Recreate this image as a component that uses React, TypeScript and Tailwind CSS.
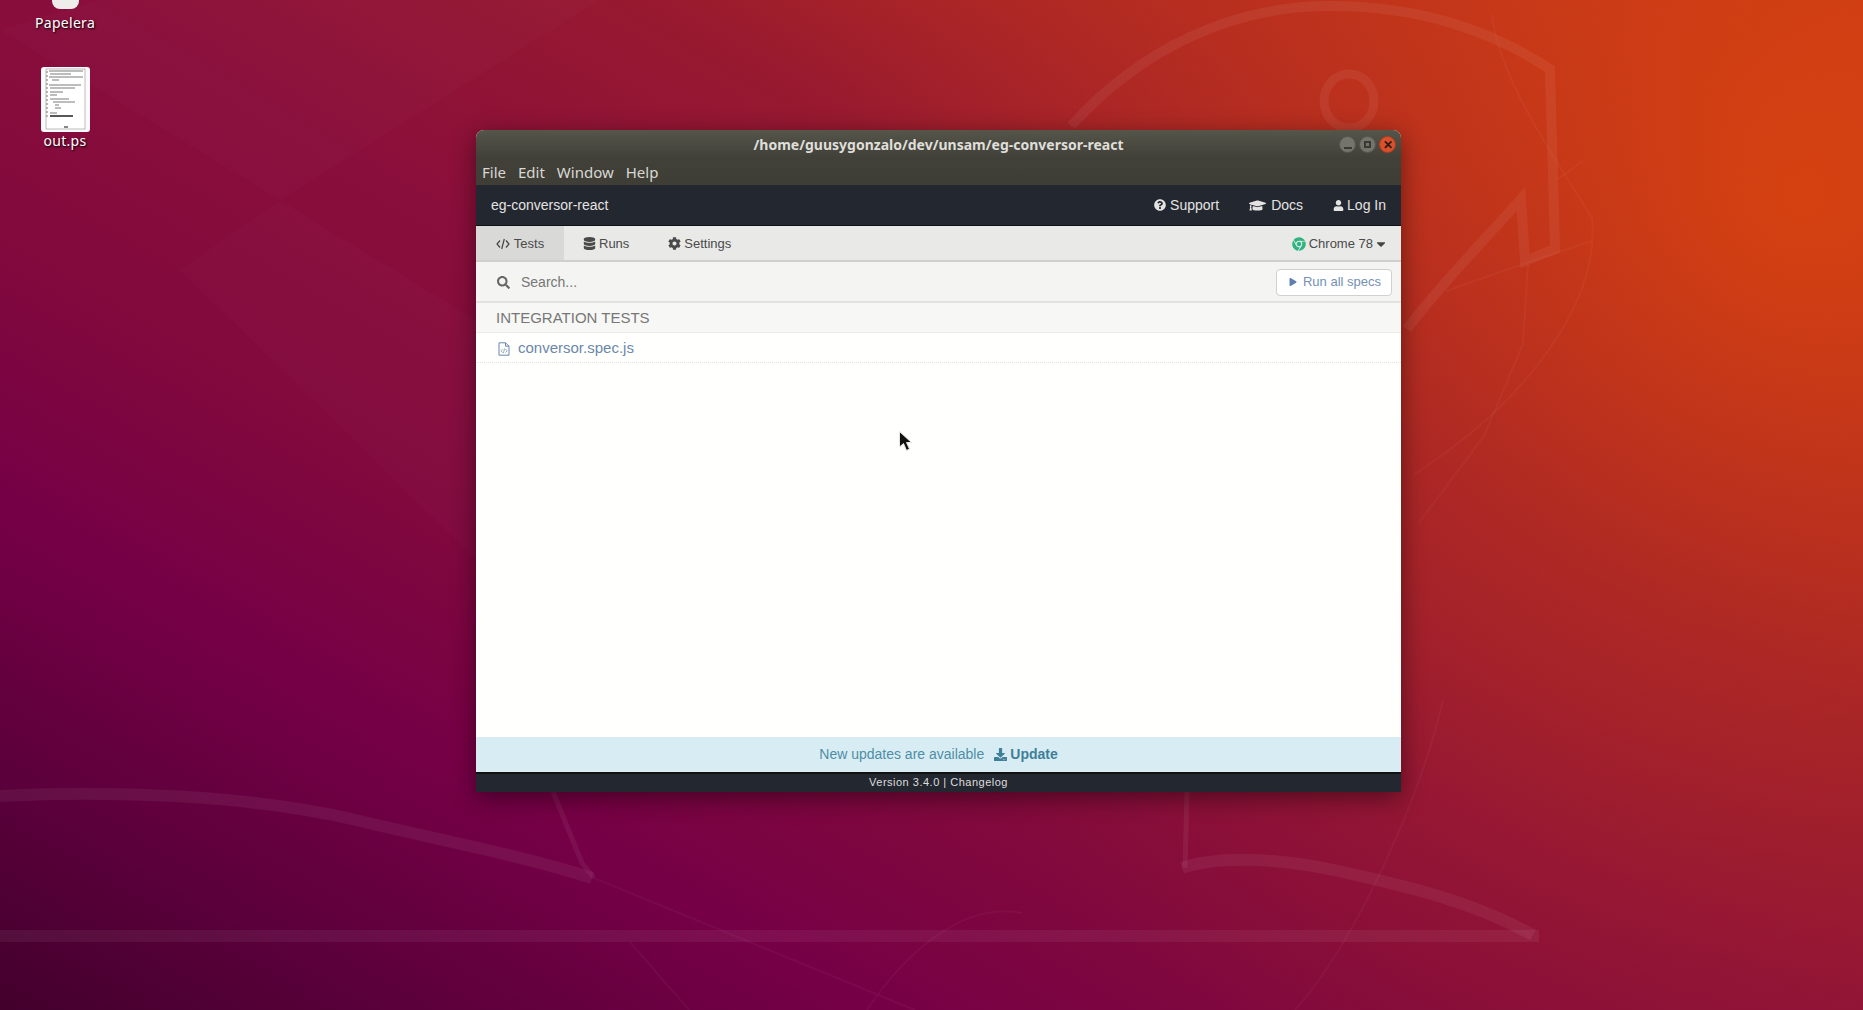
import { FaChrome, FaCog, FaDatabase, FaDownload, FaGraduationCap, FaPlay, FaQuestionCircle, FaSearch, FaUser, FaCaretDown } from 'react-icons/fa';

// Ubuntu wallpaper, drawn behind everything
function Wallpaper() {
  return (
    <svg className="absolute inset-0" width="1863" height="1010" viewBox="0 0 1863 1010">
      <defs>
        <linearGradient id="wall" gradientUnits="userSpaceOnUse" x1="0" y1="1043" x2="945" y2="-579">
          <stop offset="0" stopColor="#3f002b" />
          <stop offset="0.12" stopColor="#5a003a" />
          <stop offset="0.25" stopColor="#760046" />
          <stop offset="0.38" stopColor="#820a3c" />
          <stop offset="0.5" stopColor="#8a0e3b" />
          <stop offset="0.65" stopColor="#971930" />
          <stop offset="0.8" stopColor="#ba2f1e" />
          <stop offset="0.9" stopColor="#d03d15" />
          <stop offset="1" stopColor="#de480c" />
        </linearGradient>
        <radialGradient id="glow" gradientUnits="userSpaceOnUse" cx="1800" cy="200" r="1000">
          <stop offset="0" stopColor="#d8430f" stopOpacity="0.85" />
          <stop offset="0.55" stopColor="#b8301f" stopOpacity="0.5" />
          <stop offset="1" stopColor="#a0202c" stopOpacity="0" />
        </radialGradient>
      </defs>
      <rect width="1863" height="1010" fill="url(#wall)" />
      <rect width="1863" height="1010" fill="url(#glow)" />
      {/* faint facets */}
      <g fill="#ffffff" fillOpacity="0.014">
        <polygon points="0,30 100,0 600,0 280,200" />
        <polygon points="280,200 476,320 476,560 180,270" />
      </g>
      {/* logo, thick strokes */}
      <g fill="none" stroke="#ffffff" strokeOpacity="0.06">
        <path d="M1071 126C1140 50 1230 6 1330 6C1420 6 1490 30 1550 69L1555 249L1525 261L1521 199C1480 245 1440 285 1407 329" strokeWidth="10" />
        <ellipse cx="1349" cy="101" rx="25" ry="27" strokeWidth="9" />
        <path d="M0 796C110 790 250 795 356 820C430 838 520 855 592 878" strokeWidth="12" />
        <path d="M553 792L582 863L594 878" strokeWidth="5" />
        <path d="M1187 792L1185 868" strokeWidth="5" />
        <path d="M1182 868C1220 855 1280 858 1343 872C1400 885 1470 900 1533 935" strokeWidth="12" />
        <path d="M0 936H1539" strokeWidth="12" />
      </g>
      {/* logo, thin lines */}
      <g fill="none" stroke="#ffffff" strokeOpacity="0.035" strokeWidth="2">
        <path d="M1492 15C1500 80 1550 150 1592 218C1600 300 1530 400 1413 475" />
        <path d="M1583 161L1556 180M1592 241L1523 264L1446 291" />
        <path d="M1528 264L1523 344L1484 436L1418 524" />
        <path d="M594 878L915 1010M867 1010C900 960 960 900 1022 913M1443 700C1420 800 1355 943 1295 1010M630 942L689 1010" />
      </g>
    </svg>
  );
}

function TrashIcon() {
  return <div className="absolute left-[52px] top-0 w-[27px] h-[9px] bg-[#efedeb] rounded-b-[8px]" />;
}

function PostscriptThumb() {
  return (
    <svg className="absolute left-[41px] top-[67px]" width="49" height="65" viewBox="0 0 49 65">
      <rect width="49" height="65" rx="3" fill="#fbfbfb" />
      <rect x="5" y="2" width="39" height="60" fill="#ffffff" stroke="#8f8f8f" strokeWidth="0.6" />
      <g stroke="#444" strokeWidth="0.7">
        <path d="M8 4H42M9 7H30M8 10H42M11 13H18" />
        <path d="M8 18H40M9 21H34M9 25H22M9 28H16" />
        <path d="M9 32H28M12 35H34M14 38H18M14 41H20" />
        <path d="M9 46H16" />
      </g>
      <path d="M9 49H32" stroke="#111" strokeWidth="1.4" />
      <path d="M23 60H27" stroke="#111" strokeWidth="1" />
      <path d="M6 4V50" stroke="#777" strokeWidth="1" strokeDasharray="2 2" />
    </svg>
  );
}

function Cursor() {
  return (
    <svg className="absolute left-[898px] top-[430px]" width="16" height="24" viewBox="0 0 16 24">
      <path d="M1.5 1.5V17L5.5 13.5L8.5 20.5L11.5 19L8.5 12.5H13.5Z" fill="#111" stroke="#e8e8e8" strokeWidth="1" />
    </svg>
  );
}

function CodeIcon() {
  return (
    <svg width="14" height="12" viewBox="0 0 14 12" fill="none" stroke="#444" strokeWidth="1.2">
      <path d="M4 2.5L1 6L4 9.5M10 2.5L13 6L10 9.5M8.3 1L5.7 11" />
    </svg>
  );
}

function FileCodeIcon() {
  return (
    <svg width="12" height="14" viewBox="0 0 12 14" fill="none" stroke="#6b87ab" strokeWidth="1">
      <path d="M1 .8H7.5L11 4.2V13.2H1Z" />
      <path d="M7.5 .8V4.2H11" />
      <path d="M4.5 7L3 8.8L4.5 10.6M7.5 7L9 8.8L7.5 10.6M6.6 6.4L5.4 11.2" strokeWidth="0.7" />
    </svg>
  );
}

function WindowButton({ close, children }: { close?: boolean; children: React.ReactNode }) {
  return (
    <div className={close
      ? 'w-[17px] h-[17px] rounded-full bg-[#d9502c] flex items-center justify-center text-[#2b1a14] border border-[#a83d20]'
      : 'w-[17px] h-[17px] rounded-full bg-[#74746d] flex items-center justify-center border border-[#55554f]'}>
      {children}
    </div>
  );
}

export default function App() {
  return (
    <div className="relative w-[1863px] h-[1010px] overflow-hidden font-['Liberation_Sans',sans-serif]">
      <Wallpaper />

      {/* Desktop icons */}
      <TrashIcon />
      <div className="absolute left-0 top-[13px] w-[130px] text-center text-[14px] leading-[20px] tracking-[0.3px] text-white [text-shadow:1px_1px_2px_#000] font-['Noto_Sans',sans-serif]">Papelera</div>
      <PostscriptThumb />
      <div className="absolute left-0 top-[131px] w-[130px] text-center text-[14px] leading-[20px] tracking-[0.3px] text-white [text-shadow:1px_1px_2px_#000] font-['Noto_Sans',sans-serif]">out.ps</div>

      {/* App window */}
      <div className="absolute left-[476px] top-[130px] w-[925px] h-[662px] flex flex-col rounded-t-[8px] overflow-hidden shadow-[0_6px_24px_rgba(0,0,0,0.45)] bg-[#fffffd]">
        <div className="h-[55px] shrink-0 flex flex-col bg-gradient-to-b from-[#55554a] via-[#41413a] via-50% to-[#3e3e37]">
          <div className="relative h-[29px] flex items-center justify-center">
            <span className="text-[14px] font-bold text-[#dfded9] font-['Noto_Sans',sans-serif]">/home/guusygonzalo/dev/unsam/eg-conversor-react</span>
            <div className="absolute right-[5px] top-[6px] flex items-center gap-[3px]">
              <WindowButton><span className="w-[8px] h-[2px] bg-[#3a3a35] mt-[6px]" /></WindowButton>
              <WindowButton><span className="w-[7px] h-[7px] border-2 border-[#3a3a35]" /></WindowButton>
              <WindowButton close><span className="text-[12px] leading-none font-bold">✕</span></WindowButton>
            </div>
          </div>
          <div className="flex items-center h-[26px] pl-[6px] gap-[12px] text-[15px] text-[#d9d8d3] font-['Noto_Sans',sans-serif]">
            <span>File</span>
            <span>Edit</span>
            <span>Window</span>
            <span>Help</span>
          </div>
        </div>

        {/* Project nav */}
        <div className="h-[41px] shrink-0 flex items-center justify-between px-[15px] bg-[#23272f] border-b border-[#111] text-[14px] text-[#e3e3e3]">
          <span>eg-conversor-react</span>
          <div className="flex items-center gap-[30px]">
            <span className="flex items-center gap-[4px]"><FaQuestionCircle className="text-[12px]" />Support</span>
            <span className="flex items-center gap-[5px]"><FaGraduationCap className="text-[17px]" />Docs</span>
            <span className="flex items-center gap-[3px]"><FaUser className="text-[11px]" />Log In</span>
          </div>
        </div>

        {/* Tabs */}
        <div className="h-[36px] shrink-0 flex items-stretch justify-between bg-[#e9e9e7] border-b-2 border-[#cfcfcd] text-[13px] text-[#4a4a4a]">
          <div className="flex items-stretch">
            <div className="w-[88px] pt-[1px] bg-[#d9d9d7] flex items-center justify-center gap-[4px]"><CodeIcon />Tests</div>
            <div className="flex items-center pt-[1px] gap-[3px] ml-[19px]"><FaDatabase className="text-[13px]" />Runs</div>
            <div className="flex items-center pt-[1px] gap-[3px] ml-[39px]"><FaCog className="text-[13px]" />Settings</div>
          </div>
          <div className="flex items-center pt-[1px] gap-[3px] pr-[13px]">
            <FaChrome className="text-[14px] text-[#2fb381]" />
            <span>Chrome 78</span>
            <FaCaretDown className="text-[14px] ml-[-2px] text-[#444]" />
          </div>
        </div>

        {/* Search */}
        <div className="h-[41px] shrink-0 flex items-center justify-between bg-[#f4f4f2] border-b-2 border-[#e2e2e0] pl-[21px] pr-[9px]">
          <div className="flex items-center pt-[1px] gap-[11px] text-[14px] text-[#777]">
            <FaSearch className="text-[13px] text-[#666]" />
            <span>Search...</span>
          </div>
          <div className="w-[116px] h-[27px] mt-[1px] pl-[2px] flex items-center justify-center gap-[6px] rounded-[4px] border border-[#d0d0ce] bg-white text-[13px] text-[#7490b3]">
            <FaPlay className="text-[8px] text-[#5d80b0]" />
            Run all specs
          </div>
        </div>

        <div className="h-[30px] shrink-0 flex items-center pl-[20px] pt-[2px] bg-[#f7f7f5] border-b border-[#ebebe9] text-[15px] text-[#777]">INTEGRATION TESTS</div>

        <div className="h-[30px] shrink-0 flex items-center pl-[22px] pt-[2px] gap-[8px] border-b border-dotted border-[#e3e3e1] text-[15px] text-[#6b87ab]">
          <FileCodeIcon />
          conversor.spec.js
        </div>

        <div className="flex-1" />

        <div className="h-[35px] shrink-0 flex items-center justify-center gap-[10px] bg-[#d8edf3] text-[14px] text-[#4f8ea6]">
          <span>New updates are available</span>
          <span className="flex items-center gap-[3px] font-bold text-[#3f7f99]"><FaDownload className="text-[13px]" />Update</span>
        </div>

        <div className="h-[20px] shrink-0 flex items-center justify-center pb-[2px] bg-[#23272f] border-t-2 border-[#111] text-[11px] tracking-[0.5px] text-[#dedede]">Version 3.4.0 | Changelog</div>
      </div>

      <Cursor />
    </div>
  );
}
